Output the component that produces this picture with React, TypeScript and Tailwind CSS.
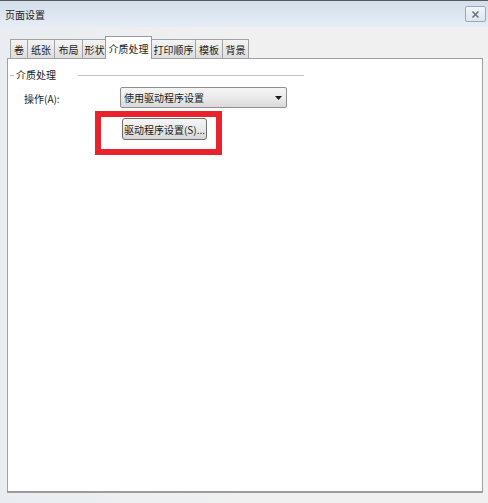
import { ReactNode } from 'react'

const font = { fontFamily: '"Noto Sans CJK SC", "Noto Sans", sans-serif' }

const tabs = [
  { label: '卷', w: 'w-[17px]' },
  { label: '纸张', w: 'w-[27px]' },
  { label: '布局', w: 'w-[28px]' },
  { label: '形状', w: 'w-[24px]' },
  { label: '介质处理', w: 'w-[47px]', active: true },
  { label: '打印顺序', w: 'w-[44px]' },
  { label: '模板', w: 'w-[27px]' },
  { label: '背景', w: 'w-[27px]' },
]

function Tab({ label, w, active }: { label: string; w: string; active?: boolean }) {
  if (active) {
    return (
      <div
        className={`${w} h-[23px] -mx-px relative z-10 flex items-center justify-center bg-white border border-b-0 border-[#9a9a9a] text-[10px] text-[#1a1a1a]`}
      >
        {label}
      </div>
    )
  }
  return (
    <div
      className={`${w} h-[20px] flex items-center justify-center bg-gradient-to-b from-[#f4f4f4] to-[#dcdcdc] border border-r-0 last:border-r border-b-0 border-[#a3a3a3] text-[10px] text-[#1a1a1a]`}
    >
      {label}
    </div>
  )
}

function WinButton({ children }: { children: ReactNode }) {
  return (
    <div className="w-[85px] h-[22px] flex items-center justify-center rounded-[3px] border border-[#707070] bg-gradient-to-b from-[#f6f6f6] via-[#e9e9e9] to-[#d6d6d6] text-[10px] text-[#1a1a1a]">
      {children}
    </div>
  )
}

export default function App() {
  return (
    <div className="w-[488px] h-[503px] bg-[#f0f0f0] flex flex-col overflow-hidden" style={font}>
      {/* title bar */}
      <div className="h-[27px] border-t border-[#5a5a5a] bg-gradient-to-b from-[#d3dfec] to-[#e6edf5] flex items-center justify-between pl-[5px] pr-[2px]">
        <span className="text-[10px] text-[#1a1a1a]">页面设置</span>
        <div className="w-[21px] h-[16px] border border-[#9aa7b6] rounded-[2px] bg-gradient-to-b from-[#f3f6f9] to-[#dde5ee] flex items-center justify-center">
          <svg width="9" height="9" viewBox="0 0 9 9">
            <path d="M1.5 1.5 L7.5 7.5 M7.5 1.5 L1.5 7.5" stroke="#6b7480" strokeWidth="1.6" />
          </svg>
        </div>
      </div>

      {/* body */}
      <div className="flex-1 flex flex-col pt-[9px] pl-[8px] bg-gradient-to-r from-[#e9edf1] via-[#f0f0f0] to-[#f0f0f0]">
        <div className="flex items-end ml-[2px]">
          {tabs.map((t) => (
            <Tab key={t.label} {...t} />
          ))}
        </div>

        <div className="-ml-px -mt-px w-[476px] h-[435px] bg-white border border-[#a0a0a0] border-b-2 border-b-[#9c9c9c] flex flex-col">
          {/* group header */}
          <div className="flex items-center pt-[9px] ml-[2px]">
            <div className="w-[4px] h-px bg-[#b9b9b9]" />
            <span className="ml-[2px] text-[10px] leading-[14px] text-[#1a1a1a]">介质处理</span>
            <div className="ml-[22px] w-[226px] h-px bg-[#c4c4c4]" />
          </div>

          {/* operation row */}
          <div className="flex items-center mt-[5px]">
            <span className="ml-[16px] w-[96px] pt-[2px] text-[10px] text-[#1a1a1a]">操作(A):</span>
            <div className="w-[167px] h-[21px] flex items-center justify-between pl-[3px] pr-[4px] rounded-[2px] border border-[#8e8f8f] bg-gradient-to-b from-[#f4f4f4] via-[#ebebeb] to-[#d9d9d9] text-[10px] text-[#1a1a1a]">
              <span>使用驱动程序设置</span>
              <svg width="7" height="4" viewBox="0 0 7 4">
                <path d="M0 0 H7 L3.5 4 Z" fill="#1a1a1a" />
              </svg>
            </div>
          </div>

          {/* driver settings button, highlighted */}
          <div className="ml-[87px] mt-[3px] w-[127px] h-[44px] border-[6px] border-[#e8232b] pl-[21px] pt-px">
            <WinButton>驱动程序设置(S)...</WinButton>
          </div>
        </div>
      </div>
    </div>
  )
}
